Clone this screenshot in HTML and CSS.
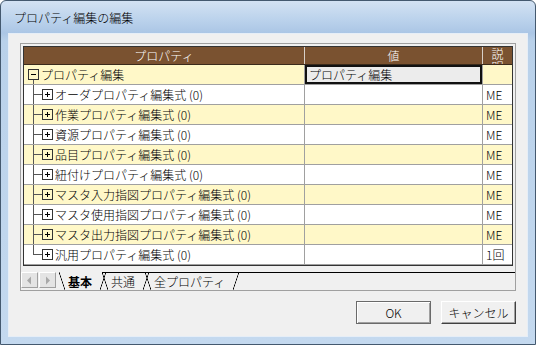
FILE: index.html
```html
<!DOCTYPE html>
<html lang="ja">
<head>
    <meta charset="UTF-8">
    <title>プロパティ編集の編集</title>
    <link rel="stylesheet" href="styles.css">
</head>
<body>
<div class="window">
    <div class="titlebar">プロパティ編集の編集</div>
    <div class="client">
        <div class="sheet">
            <div class="grid">
                <div class="row head">
                    <div class="cell c-name">プロパティ</div>
                    <div class="cell c-value">値</div>
                    <div class="cell c-desc">説明</div>
                </div>
                <div class="row alt">
                    <div class="cell c-name root">
                        <svg class="node" width="11" height="11" viewBox="0 0 11 11"><rect x="0.5" y="0.5" width="10" height="10" fill="none" stroke="#333"/><path d="M3 5.5h5" stroke="#000"/></svg>プロパティ編集
                    </div>
                    <div class="cell c-value editing">プロパティ編集</div>
                    <div class="cell c-desc"></div>
                </div>
                <div class="row">
                    <div class="cell c-name"><span class="branch"></span><svg class="node" width="11" height="11" viewBox="0 0 11 11"><rect x="0.5" y="0.5" width="10" height="10" fill="none" stroke="#333"/><path d="M3 5.5h5M5.5 3v5" stroke="#000"/></svg>オーダプロパティ編集式 (0)</div>
                    <div class="cell c-value"></div>
                    <div class="cell c-desc">ME</div>
                </div>
                <div class="row alt">
                    <div class="cell c-name"><span class="branch"></span><svg class="node" width="11" height="11" viewBox="0 0 11 11"><rect x="0.5" y="0.5" width="10" height="10" fill="none" stroke="#333"/><path d="M3 5.5h5M5.5 3v5" stroke="#000"/></svg>作業プロパティ編集式 (0)</div>
                    <div class="cell c-value"></div>
                    <div class="cell c-desc">ME</div>
                </div>
                <div class="row">
                    <div class="cell c-name"><span class="branch"></span><svg class="node" width="11" height="11" viewBox="0 0 11 11"><rect x="0.5" y="0.5" width="10" height="10" fill="none" stroke="#333"/><path d="M3 5.5h5M5.5 3v5" stroke="#000"/></svg>資源プロパティ編集式 (0)</div>
                    <div class="cell c-value"></div>
                    <div class="cell c-desc">ME</div>
                </div>
                <div class="row alt">
                    <div class="cell c-name"><span class="branch"></span><svg class="node" width="11" height="11" viewBox="0 0 11 11"><rect x="0.5" y="0.5" width="10" height="10" fill="none" stroke="#333"/><path d="M3 5.5h5M5.5 3v5" stroke="#000"/></svg>品目プロパティ編集式 (0)</div>
                    <div class="cell c-value"></div>
                    <div class="cell c-desc">ME</div>
                </div>
                <div class="row">
                    <div class="cell c-name"><span class="branch"></span><svg class="node" width="11" height="11" viewBox="0 0 11 11"><rect x="0.5" y="0.5" width="10" height="10" fill="none" stroke="#333"/><path d="M3 5.5h5M5.5 3v5" stroke="#000"/></svg>紐付けプロパティ編集式 (0)</div>
                    <div class="cell c-value"></div>
                    <div class="cell c-desc">ME</div>
                </div>
                <div class="row alt">
                    <div class="cell c-name"><span class="branch"></span><svg class="node" width="11" height="11" viewBox="0 0 11 11"><rect x="0.5" y="0.5" width="10" height="10" fill="none" stroke="#333"/><path d="M3 5.5h5M5.5 3v5" stroke="#000"/></svg>マスタ入力指図プロパティ編集式 (0)</div>
                    <div class="cell c-value"></div>
                    <div class="cell c-desc">ME</div>
                </div>
                <div class="row">
                    <div class="cell c-name"><span class="branch"></span><svg class="node" width="11" height="11" viewBox="0 0 11 11"><rect x="0.5" y="0.5" width="10" height="10" fill="none" stroke="#333"/><path d="M3 5.5h5M5.5 3v5" stroke="#000"/></svg>マスタ使用指図プロパティ編集式 (0)</div>
                    <div class="cell c-value"></div>
                    <div class="cell c-desc">ME</div>
                </div>
                <div class="row alt">
                    <div class="cell c-name"><span class="branch"></span><svg class="node" width="11" height="11" viewBox="0 0 11 11"><rect x="0.5" y="0.5" width="10" height="10" fill="none" stroke="#333"/><path d="M3 5.5h5M5.5 3v5" stroke="#000"/></svg>マスタ出力指図プロパティ編集式 (0)</div>
                    <div class="cell c-value"></div>
                    <div class="cell c-desc">ME</div>
                </div>
                <div class="row">
                    <div class="cell c-name"><span class="branch last"></span><svg class="node" width="11" height="11" viewBox="0 0 11 11"><rect x="0.5" y="0.5" width="10" height="10" fill="none" stroke="#333"/><path d="M3 5.5h5M5.5 3v5" stroke="#000"/></svg>汎用プロパティ編集式 (0)</div>
                    <div class="cell c-value"></div>
                    <div class="cell c-desc">1回</div>
                </div>
            </div>
            <div class="tabbar">
                <span class="scroll-btn"><svg width="7" height="9" viewBox="0 0 7 9"><path d="M5 0.5v8L1 4.5z" fill="#a8a8a8"/></svg></span>
                <span class="scroll-btn"><svg width="7" height="9" viewBox="0 0 7 9"><path d="M2 0.5v8L6 4.5z" fill="#a8a8a8"/></svg></span>
                <span class="tab active">基本</span>
                <span class="tab">共通</span>
                <span class="tab">全プロパティ</span>
                <span class="tab-rest"></span>
            </div>
        </div>
        <div class="buttons">
            <button class="default">OK</button>
            <button>キャンセル</button>
        </div>
    </div>
</div>
</body>
</html>
```

FILE: styles.css
```css
body {
    margin: 0;
    font-family: "Noto Sans CJK JP", "Noto Sans", sans-serif;
    font-size: 12px;
    font-weight: 300;
    color: #000;
}
.window {
    width: 536px;
    height: 345px;
    box-sizing: border-box;
    border: 1px solid #44596f;
    border-radius: 6px 6px 0 0;
    padding: 0 7px 7px 7px;
    background: linear-gradient(#d3e2f3 0, #bcd3ec 18px, #abc6e5 32px, #b9d1ea 40px, #c4d9ef 100%);
}
.titlebar {
    height: 32px;
    line-height: 34px;
    padding-left: 6px;
    color: #000;
}
.client {
    height: 304px;
    box-sizing: border-box;
    background: #f0f0f0;
    border: 1px solid #e6eef7;
    padding: 9px 11px 0 11px;
}
.sheet {
    width: 496px;
    box-sizing: border-box;
    border: 1px solid #a0a0a0;
    padding: 2px 2px 0 2px;
    background: #f0f0f0;
}
.grid {
    border: 1px solid #333;
    background: #fff;
}
.row {
    display: flex;
    height: 20px;
    box-sizing: border-box;
    border-bottom: 1px solid #a0a0a0;
    background: #fff;
}
.row.alt {
    background: #fff8c8;
}
.cell {
    box-sizing: border-box;
    height: 19px;
    line-height: 19px;
    white-space: nowrap;
    overflow: hidden;
}
.c-name {
    width: 281px;
    border-right: 1px solid #a0a0a0;
    display: flex;
    align-items: center;
}
.c-value {
    width: 178px;
    border-right: 1px solid #a0a0a0;
}
.c-desc {
    width: 29px;
    padding-left: 3px;
}
.row.head {
    height: 18px;
    background: #7a5230;
    border-bottom: 1px solid #3a2a1a;
    color: #fff;
}
.head .cell {
    height: 17px;
    line-height: 17px;
    text-align: center;
    justify-content: center;
    border-right-color: #d8d0c8;
}
.head .c-desc {
    white-space: normal;
    line-height: 13px;
    padding: 0 3px;
}
.root {
    position: relative;
    padding-left: 4px;
}
.root::after {
    content: "";
    position: absolute;
    left: 9px;
    top: 15px;
    bottom: -1px;
    border-left: 1px solid #555;
}
.node {
    flex: none;
    margin-right: 2px;
}
.branch {
    position: relative;
    flex: none;
    width: 18px;
    height: 19px;
}
.branch::before {
    content: "";
    position: absolute;
    left: 9px;
    top: 0;
    bottom: -1px;
    border-left: 1px solid #555;
}
.branch.last::before {
    bottom: 9px;
}
.branch::after {
    content: "";
    position: absolute;
    left: 9px;
    width: 9px;
    top: 9px;
    border-top: 1px solid #555;
}
.editing {
    background: #ececec;
    box-shadow: inset 0 0 0 2px #111;
    padding-left: 4px;
}
.tabbar {
    display: flex;
    height: 18px;
    margin: 6px -2px 0 -2px;
    border-bottom: 1px solid #a0a0a0;
    margin-bottom: -1px;
}
.scroll-btn {
    width: 17px;
    height: 16px;
    box-sizing: border-box;
    border: 1px solid;
    border-color: #fff #a0a0a0 #a0a0a0 #fff;
    background: #e4e4e4;
    display: flex;
    align-items: center;
    justify-content: center;
    margin-right: 1px;
}
.tab {
    position: relative;
    height: 18px;
    line-height: 17px;
    padding: 0 14px 0 9px;
    margin-left: -4px;
    border-top: 1px solid #000;
    box-sizing: border-box;
}
.scroll-btn + .scroll-btn + .tab {
    margin-left: 2px;
}
.tab.active {
    font-weight: bold;
    border-top-color: transparent;
}
.tab::before,
.tab::after {
    content: "";
    position: absolute;
    top: -1px;
    width: 6px;
    height: 18px;
}
.tab::before {
    left: 0;
    background: linear-gradient(to top right, transparent calc(50% - 0.7px), #000 50%, transparent calc(50% + 0.7px));
}
.tab::after {
    right: 0;
    background: linear-gradient(to bottom right, transparent calc(50% - 0.7px), #000 50%, transparent calc(50% + 0.7px));
}
.tab-rest {
    flex: 1;
    border-top: 1px solid #000;
    height: 18px;
    box-sizing: border-box;
}
.buttons {
    display: flex;
    justify-content: flex-end;
    gap: 10px;
    margin-top: 10px;
}
button {
    width: 75px;
    height: 23px;
    font-family: "Noto Sans CJK JP", "Noto Sans", sans-serif;
    font-size: 12px;
    font-weight: 300;
    background: #f0f0f0;
    border: 1px solid;
    border-color: #fff #404040 #404040 #fff;
    box-shadow: inset -1px -1px #a0a0a0;
    padding: 0;
    color: #000;
}
button.default {
    outline: 1px solid #6a6a6a;
    outline-offset: -1px;
    border-color: #6a6a6a #404040 #404040 #6a6a6a;
    box-shadow: inset 1px 1px #fff, inset -1px -1px #a0a0a0;
}
```
